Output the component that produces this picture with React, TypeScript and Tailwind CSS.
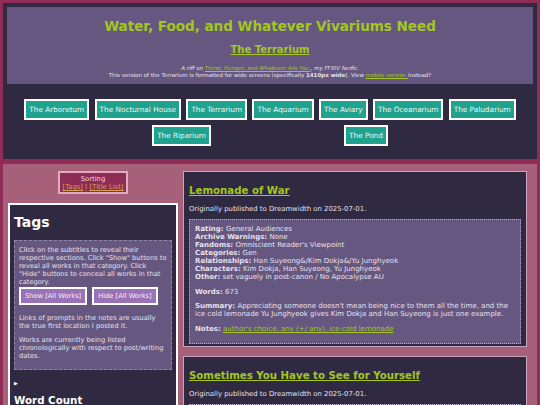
import type { ReactNode } from "react";

const SECTIONS = [
  "The Arboretum",
  "The Nocturnal House",
  "The Terrarium",
  "The Aquarium",
  "The Aviary",
  "The Oceanarium",
  "The Paludarium",
  "The Riparium",
  "The Pond",
];

type Work = {
  title: string;
  published: string;
  rating: string;
  warnings: string;
  fandoms: string;
  categories: string;
  relationships: string;
  characters: string;
  other: string;
  words: number;
  summary: string;
  notes: string;
};

const WORKS: Work[] = [
  {
    title: "Lemonade of War",
    published: "2025-07-01",
    rating: "General Audiences",
    warnings: "None",
    fandoms: "Omniscient Reader's Viewpoint",
    categories: "Gen",
    relationships: "Han Suyeong&/Kim Dokja&/Yu Junghyeok",
    characters: "Kim Dokja, Han Suyeong, Yu Junghyeok",
    other: "set vaguely in post-canon / No Apocalypse AU",
    words: 673,
    summary:
      "Appreciating someone doesn't mean being nice to them all the time, and the ice cold lemonade Yu Junghyeok gives Kim Dokja and Han Suyeong is just one example.",
    notes: "author's choice, any (+/ any), ice-cold lemonade",
  },
  {
    title: "Sometimes You Have to See for Yourself",
    published: "2025-07-01",
    rating: "General Audiences",
    warnings: "None",
    fandoms: "Omniscient Reader's Viewpoint",
    categories: "Gen",
    relationships: "Kim Dokja & Yu Junghyeok",
    characters: "Kim Dokja, Yu Junghyeok",
    other: "post-canon",
    words: 512,
    summary: "",
    notes: "",
  },
];

function Field({ label, children }: { label: string; children: ReactNode }) {
  return (
    <div>
      <b>{label}:</b> {children}
    </div>
  );
}

function WorkCard({ work }: { work: Work }) {
  return (
    <article className="border border-[#c9a3b9] bg-[#2f2a41] px-[5px] pb-[2px] pt-[12px]">
      <h3 className="text-[10.2px] font-bold leading-[14px] text-[#a3c720] underline">
        {work.title}
      </h3>
      <p className="mt-[7px] text-[6.9px] leading-[8px] text-[#e6e1ee]">
        Originally published to Dreamwidth on {work.published}.
      </p>
      <div className="mt-[6px] border border-dotted border-[#b9b0cc] bg-[#65577f] px-[5px] pb-[10px] pt-[5px] text-[7px] leading-[8px] text-[#e6e1ee]">
        <Field label="Rating">{work.rating}</Field>
        <Field label="Archive Warnings">{work.warnings}</Field>
        <Field label="Fandoms">{work.fandoms}</Field>
        <Field label="Categories">{work.categories}</Field>
        <Field label="Relationships">{work.relationships}</Field>
        <Field label="Characters">{work.characters}</Field>
        <Field label="Other">{work.other}</Field>
        <p className="mt-[7px]">
          <b>Words:</b> {work.words}
        </p>
        <p className="mt-[6px]">
          <b>Summary:</b> {work.summary}
        </p>
        <p className="mt-[7px]">
          <b>Notes:</b>{" "}
          <a className="text-[#a3c720] underline">{work.notes}</a>
        </p>
      </div>
    </article>
  );
}

export default function App() {
  return (
    <div className="min-h-screen overflow-hidden bg-[#8f2d56] p-[3px] font-['DejaVu_Sans',Verdana,sans-serif] text-[#e6e1ee]">
      <header className="bg-[#2f2a41] p-[4px] pb-[13px]">
        <div className="bg-[#65577f] pb-[5px] pt-[11px] text-center">
          <h1 className="text-[13.5px] font-bold leading-[16px] text-[#a3c720]">
            Water, Food, and Whatever Vivariums Need
          </h1>
          <h2 className="mt-[10px] text-[10px] font-bold leading-[12px] text-[#a3c720] underline">
            The Terrarium
          </h2>
          <p className="mt-[9px] text-[5.5px] leading-[7px]">
            <i>
              A riff on{" "}
              <a className="text-[#a3c720] underline">Thirst, Hunger, and Whatever Ails You </a>,
              my FFXIV fanfic.
            </i>
            <br />
            This version of the Terrarium is formatted for wide screens (specifically{" "}
            <b>1410px wide</b>). View{" "}
            <a className="text-[#a3c720] underline">mobile version </a>instead?
          </p>
        </div>
        <nav className="mx-[12px] mt-[15px] flex flex-wrap justify-evenly gap-y-[5px]">
          {SECTIONS.map((name) => (
            <a
              className="border-2 border-white bg-[#1fa38f] px-[3px] py-[4px] text-[7.3px] leading-[9px] text-[#eef6f3]"
              key={name}
            >
              {name}
            </a>
          ))}
        </nav>
      </header>

      <main className="mt-[5px] flex gap-[5px] bg-[#a6607a] pb-4 pl-[5px] pr-[10px] pt-[7px]">
        <aside className="flex w-[170px] shrink-0 flex-col items-center">
          <div className="border-2 border-[#e2a9c2] bg-[#8e2c55] px-[3px] pb-[1px] pt-[2px] text-center text-[6.8px] leading-[8px] text-[#f2dbe6]">
            Sorting
            <div className="text-[#d9a24e]">
              <a className="underline">[Tags]</a> | <a className="underline">[Title List]</a>
            </div>
          </div>
          <section className="mt-[9px] w-full border-2 border-white bg-[#2f2a41] px-[4px] pb-8 pt-[8px]">
            <h2 className="text-[14px] font-bold leading-[18px] text-white">Tags</h2>
            <div className="mt-[9px] border border-dashed border-[#8f88a4] bg-[#65577f] px-[4px] pb-[9px] pt-[5px] text-[6.7px] leading-[8px]">
              <p>
                Click on the subtitles to reveal their respective sections. Click "Show"
                buttons to reveal all works in that category. Click "Hide" buttons to
                conceal all works in that category.
              </p>
              <div className="flex gap-[5px] pt-[1px]">
                <button className="border-2 border-white bg-[#9a72b8] px-[4px] py-[3px] text-[6.7px] leading-[8px] text-[#f3eef7]">
                  Show [All Works]
                </button>
                <button className="border-2 border-white bg-[#9a72b8] px-[4px] py-[3px] text-[6.7px] leading-[8px] text-[#f3eef7]">
                  Hide [All Works]
                </button>
              </div>
              <p className="mt-[9px]">
                Links of prompts in the notes are usually the true first location I posted it.
              </p>
              <p className="mt-[6px]">
                Works are currently being listed chronologically with respect to post/writing
                dates.
              </p>
            </div>
            <div className="mt-[9px] text-[5px] leading-[8px] text-white">▶</div>
            <h2 className="mt-[6px] text-[10.3px] font-bold leading-[14px] text-white">
              Word Count
            </h2>
          </section>
        </aside>

        <div className="flex min-w-0 flex-1 flex-col gap-[9px]">
          {WORKS.map((work) => (
            <WorkCard key={work.title} work={work} />
          ))}
        </div>
      </main>
    </div>
  );
}
